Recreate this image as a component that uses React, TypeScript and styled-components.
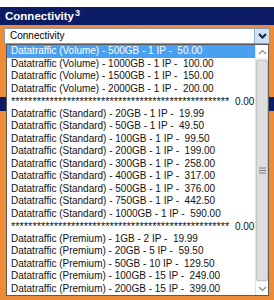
import React from "react";
import styled, { createGlobalStyle } from "styled-components";

const GlobalStyle = createGlobalStyle`
  body {
    margin: 0;
    background: #ffffff;
  }
`;

const FONT = `"Liberation Sans", Arial, sans-serif`;

const Page = styled.div`
  position: relative;
  width: 274px;
  height: 300px;
  overflow: hidden;
  background: #ef8a35;
  font-family: ${FONT};
`;

const TopStrip = styled.div`
  height: 7px;
  background: #ffffff;
`;

const Header = styled.div`
  height: 18px;
  padding-left: 5px;
  background: #0c1d66;
  color: #ffffff;
  font-weight: 700;
  font-size: 11.5px;
  line-height: 19px;
`;

const Sup = styled.sup`
  font-size: 9px;
  vertical-align: 4px;
  line-height: 0;
  margin-left: 1px;
`;

const SelectRow = styled.div`
  padding: 3px 4px 0 4px;
`;

const SelectBox = styled.div`
  display: flex;
  align-items: stretch;
  height: 14px;
  border: 1px solid #8e9aa8;
  background: #ffffff;
`;

const SelectValue = styled.div`
  flex: 1;
  padding-left: 5px;
  font-size: 10px;
  line-height: 14px;
  color: #000000;
`;

const DropButton = styled.div`
  width: 14px;
  display: flex;
  align-items: center;
  justify-content: center;
  background: #cde2f6;
  border-left: 1px solid #8fb3da;
`;

const NavyBar = styled.div`
  margin-top: 53px;
  height: 14px;
  background: #0c1d66;
`;

const List = styled.div`
  position: absolute;
  top: 44px;
  left: 6px;
  width: 261px;
  height: 250px;
  display: flex;
  border: 1px solid #5a5a5a;
  background: #ffffff;
`;

const Options = styled.div`
  flex: 1;
  display: flex;
  flex-direction: column;
`;

const Option = styled.div<{ $selected?: boolean }>`
  height: 12.5px;
  padding-left: 4px;
  font-size: 10px;
  line-height: 12.5px;
  white-space: pre;
  overflow: hidden;
  color: ${(p) => (p.$selected ? "#ffffff" : "#111111")};
  background: ${(p) => (p.$selected ? "#4a9ff0" : "transparent")};
`;

const Stars = styled.span`
  font-size: 11px;
`;

const Scrollbar = styled.div`
  width: 12px;
  display: flex;
  flex-direction: column;
  background: #eeeeee;
  border-left: 1px solid #e2e2e2;
`;

const ArrowButton = styled.div`
  height: 13px;
  display: flex;
  align-items: center;
  justify-content: center;
  background: #ffffff;
`;

const Thumb = styled.div`
  flex: 1;
  margin: 2px 0 1px;
  display: flex;
  align-items: center;
  justify-content: center;
  background: #dedede;
  border: 1px solid #c6c6c6;
  border-radius: 2px;
`;

const Chevron = ({ up, color, bold }: { up?: boolean; color: string; bold?: boolean }) => (
  <svg width="9" height="6" viewBox="0 0 9 6">
    <path
      d={up ? "M1 5 L4.5 1.5 L8 5" : "M1 1 L4.5 4.5 L8 1"}
      fill="none"
      stroke={color}
      strokeWidth={bold ? 2 : 1.2}
    />
  </svg>
);

const Grip = () => (
  <svg width="7" height="7" viewBox="0 0 7 7">
    <path d="M0 1 H7 M0 3.5 H7 M0 6 H7" stroke="#7a7a7a" strokeWidth="1" />
  </svg>
);

const STARS = "STARS";

const options: string[] = [
  "Datatraffic (Volume) - 500GB - 1 IP -  50.00",
  "Datatraffic (Volume) - 1000GB - 1 IP -  100.00",
  "Datatraffic (Volume) - 1500GB - 1 IP -  150.00",
  "Datatraffic (Volume) - 2000GB - 1 IP -  200.00",
  STARS,
  "Datatraffic (Standard) - 20GB - 1 IP -  19.99",
  "Datatraffic (Standard) - 50GB - 1 IP -  49.50",
  "Datatraffic (Standard) - 100GB - 1 IP -  99.50",
  "Datatraffic (Standard) - 200GB - 1 IP -  199.00",
  "Datatraffic (Standard) - 300GB - 1 IP -  258.00",
  "Datatraffic (Standard) - 400GB - 1 IP -  317.00",
  "Datatraffic (Standard) - 500GB - 1 IP -  376.00",
  "Datatraffic (Standard) - 750GB - 1 IP -  442.50",
  "Datatraffic (Standard) - 1000GB - 1 IP -  590.00",
  STARS,
  "Datatraffic (Premium) - 1GB - 2 IP -  19.99",
  "Datatraffic (Premium) - 20GB - 5 IP -  59.50",
  "Datatraffic (Premium) - 50GB - 10 IP -  129.50",
  "Datatraffic (Premium) - 100GB - 15 IP -  249.00",
  "Datatraffic (Premium) - 200GB - 15 IP -  399.00",
];

export default function App() {
  return (
    <>
      <GlobalStyle />
      <Page>
        <TopStrip />
        <Header>
          Connectivity<Sup>3</Sup>
        </Header>
        <SelectRow>
          <SelectBox>
            <SelectValue>Connectivity</SelectValue>
            <DropButton>
              <Chevron color="#1b1f3a" bold />
            </DropButton>
          </SelectBox>
        </SelectRow>
        <NavyBar />
        <List>
          <Options>
            {options.map((o, i) => (
              <Option key={i} $selected={i === 0}>
                {o === STARS ? (
                  <>
                    <Stars>{"*".repeat(51)}</Stars>
                    {"  0.00"}
                  </>
                ) : (
                  o
                )}
              </Option>
            ))}
          </Options>
          <Scrollbar>
            <ArrowButton>
              <Chevron up color="#8a8a8a" />
            </ArrowButton>
            <Thumb>
              <Grip />
            </Thumb>
            <ArrowButton>
              <Chevron color="#8a8a8a" />
            </ArrowButton>
          </Scrollbar>
        </List>
      </Page>
    </>
  );
}
